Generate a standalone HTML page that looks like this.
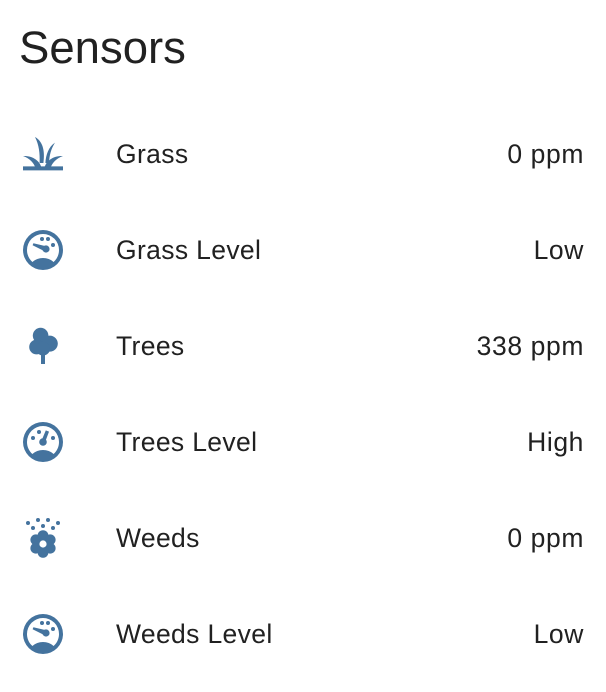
<!DOCTYPE html>
<html><head><style>
body{margin:0;background:#fff;width:606px;height:692px;overflow:hidden;font-family:"Liberation Sans",sans-serif;color:#212121}
h1{position:absolute;left:19px;top:20px;margin:0;font-weight:400;font-size:45.5px;line-height:56px}
.row{position:absolute;left:0;width:606px;height:48px}
.row svg{position:absolute;left:19px;top:0;width:48px;height:48px}
.n{position:absolute;left:116px;top:0;line-height:48px;font-size:26.5px;letter-spacing:0.35px}
.v{position:absolute;right:22px;top:0;line-height:48px;font-size:26.5px;letter-spacing:0.6px}
</style></head><body>
<h1>Sensors</h1>

<div class="row" style="top:130px">
<svg viewBox="0 0 24 24" fill="#44739e"><path d="M2,13C7,12.8 10.5,15.5 11.3,19H8.2C7.5,16.5 5.5,14.3 2,13Z"/><path d="M22,13C17,12.8 13.5,15.5 12.7,19H15.8C16.5,16.5 18.5,14.3 22,13Z"/><path d="M8,3.5C12.2,5.8 13,11 12.2,16.5L10.3,16.5C10.5,11.5 10,7.5 8,3.5Z"/><path d="M18,6.3C14.8,8.3 13.4,12.5 13.2,16.5L15,16.5C15.2,12.5 16,9.5 18,6.3Z"/><path d="M2,18.2H22V20.2H2Z"/></svg>
<div class="n">Grass</div><div class="v">0 ppm</div></div>

<div class="row" style="top:226px">
<svg viewBox="0 0 24 24" fill="#44739e"><path d="M12,2A10,10 0 0,0 2,12A10,10 0 0,0 12,22A10,10 0 0,0 22,12A10,10 0 0,0 12,2M12,4A8,8 0 0,1 20,12C20,14.4 19,16.5 17.3,18C15.9,16.7 14,16 12,16C10,16 8.2,16.7 6.7,18C5,16.5 4,14.4 4,12A8,8 0 0,1 12,4Z"/><circle cx="11.5" cy="6.5" r="1"/><circle cx="14.5" cy="6.5" r="1"/><circle cx="17" cy="9.5" r="1"/><circle cx="13.5" cy="11.5" r="1.8"/><path d="M7.2,8.6L13.8,10.2L13.2,12.8L6.8,9.6Z"/></svg>
<div class="n">Grass Level</div><div class="v">Low</div></div>

<div class="row" style="top:322px">
<svg viewBox="0 0 24 24" fill="#44739e"><circle cx="10.8" cy="6.8" r="3.9"/><circle cx="15.4" cy="10.8" r="4"/><circle cx="8.8" cy="12.5" r="3.7"/><circle cx="12" cy="13.3" r="3.5"/><rect x="11" y="14" width="2" height="7"/></svg>
<div class="n">Trees</div><div class="v">338 ppm</div></div>

<div class="row" style="top:418px">
<svg viewBox="0 0 24 24" fill="#44739e"><path d="M12,2A10,10 0 0,0 2,12A10,10 0 0,0 12,22A10,10 0 0,0 22,12A10,10 0 0,0 12,2M12,4A8,8 0 0,1 20,12C20,14.4 19,16.5 17.3,18C15.9,16.7 14,16 12,16C10,16 8.2,16.7 6.7,18C5,16.5 4,14.4 4,12A8,8 0 0,1 12,4Z"/><circle cx="10" cy="7" r="1"/><circle cx="7" cy="10" r="1"/><circle cx="17" cy="10" r="1"/><circle cx="12" cy="12" r="1.9"/><path d="M13.4,6.2L15,6.8L13.2,11.6L11.4,11Z"/></svg>
<div class="n">Trees Level</div><div class="v">High</div></div>

<div class="row" style="top:514px">
<svg viewBox="0 0 24 24" fill="#44739e"><circle cx="4.5" cy="4.5" r="1"/><circle cx="9.5" cy="3" r="1"/><circle cx="14.5" cy="3" r="1"/><circle cx="19.5" cy="4.5" r="1"/><circle cx="7" cy="7" r="1"/><circle cx="12" cy="6" r="1"/><circle cx="17" cy="7" r="1"/><circle cx="12" cy="10.8" r="2.7"/><circle cx="12" cy="19.2" r="2.7"/><circle cx="8.4" cy="12.9" r="2.7"/><circle cx="15.6" cy="12.9" r="2.7"/><circle cx="8.4" cy="17.1" r="2.7"/><circle cx="15.6" cy="17.1" r="2.7"/><circle cx="12" cy="15" r="3"/><circle cx="12" cy="15" r="1.8" fill="#fff"/></svg>
<div class="n">Weeds</div><div class="v">0 ppm</div></div>

<div class="row" style="top:610px">
<svg viewBox="0 0 24 24" fill="#44739e"><path d="M12,2A10,10 0 0,0 2,12A10,10 0 0,0 12,22A10,10 0 0,0 22,12A10,10 0 0,0 12,2M12,4A8,8 0 0,1 20,12C20,14.4 19,16.5 17.3,18C15.9,16.7 14,16 12,16C10,16 8.2,16.7 6.7,18C5,16.5 4,14.4 4,12A8,8 0 0,1 12,4Z"/><circle cx="11.5" cy="6.5" r="1"/><circle cx="14.5" cy="6.5" r="1"/><circle cx="17" cy="9.5" r="1"/><circle cx="13.5" cy="11.5" r="1.8"/><path d="M7.2,8.6L13.8,10.2L13.2,12.8L6.8,9.6Z"/></svg>
<div class="n">Weeds Level</div><div class="v">Low</div></div>
</body></html>
